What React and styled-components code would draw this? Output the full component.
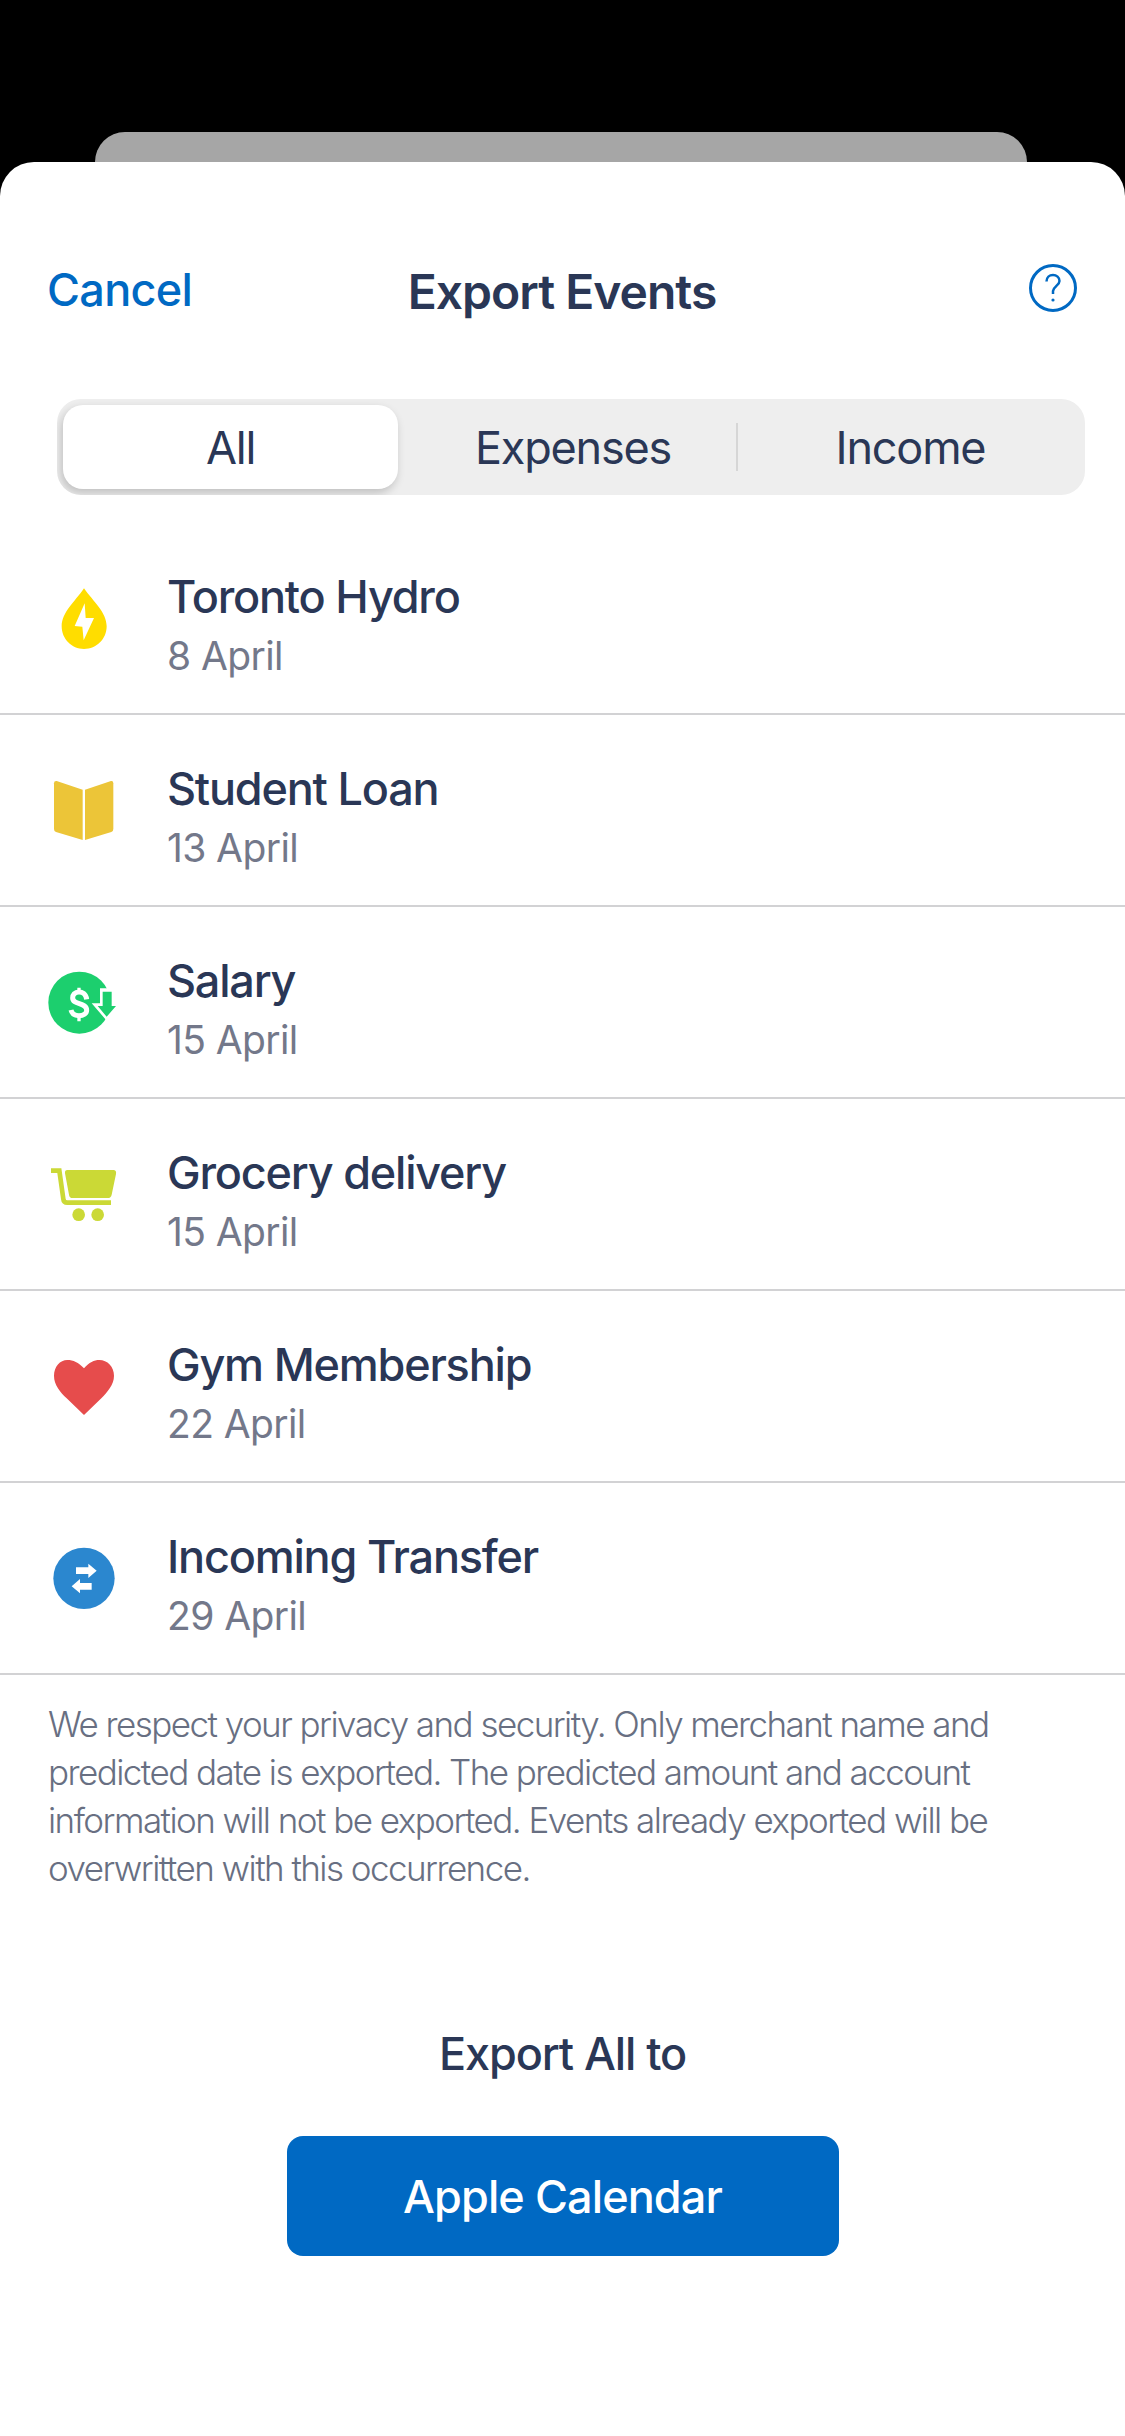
import React from 'react';
import styled, { createGlobalStyle } from 'styled-components';

const GlobalStyle = createGlobalStyle`
  html, body {
    margin: 0;
    padding: 0;
    background: #000;
    font-family: Inter, "Noto Sans", sans-serif;
  }
`;

const Page = styled.div`
  width: 1125px;
  height: 2436px;
  padding-top: 132px;
  box-sizing: border-box;
  overflow: hidden;
  background: #000;
`;

const BackCard = styled.div`
  height: 30px;
  margin: 0 98px 0 95px;
  background: #a6a6a6;
  border-radius: 30px 30px 0 0;
`;

const Sheet = styled.div`
  height: 2274px;
  background: #fff;
  border-radius: 34px 34px 0 0;
`;

const Header = styled.div`
  display: grid;
  grid-template-columns: 1fr auto 1fr;
  align-items: center;
  height: 237px;
  padding: 22px 48px 0 47px;
  box-sizing: border-box;
`;

const Cancel = styled.div`
  font-size: 45px;
  font-weight: 500;
  letter-spacing: -0.7px;
  color: #0069c3;
  margin-top: -5px;
`;

const Title = styled.div`
  font-size: 48px;
  font-weight: 600;
  letter-spacing: -1px;
  color: #2a3756;
`;

const HelpIcon = styled.svg`
  justify-self: end;
  width: 48px;
  height: 48px;
  margin-top: -7px;
`;

const Segments = styled.div`
  display: grid;
  grid-template-columns: 335px 338px 1fr;
  align-items: stretch;
  width: 1028px;
  height: 96px;
  margin-left: 57px;
  padding: 6px 0 6px 6px;
  box-sizing: border-box;
  background: #eeeeee;
  border-radius: 24px;
  overflow: hidden;
`;

const Segment = styled.div`
  display: flex;
  align-items: center;
  justify-content: center;
  font-size: 45px;
  font-weight: 400;
  letter-spacing: -1.2px;
  color: #2a3756;
  background: ${({ $active }) => ($active ? '#fff' : 'transparent')};
  border-radius: 20px;
  box-shadow: ${({ $active }) => ($active ? '-2px 4px 10px rgba(0,0,0,.2)' : 'none')};
  padding-left: ${({ $pad }) => $pad || 0}px;
`;

const Divided = styled(Segment)`
  position: relative;
  &::before {
    content: '';
    position: absolute;
    left: 0;
    top: 18px;
    bottom: 18px;
    width: 2px;
    background: #d6d6d6;
  }
`;

const List = styled.div`
  margin-top: 28px;
`;

const Row = styled.div`
  display: flex;
  align-items: center;
  height: 192px;
  box-sizing: border-box;
  border-bottom: 2px solid #d2d2d4;
`;

const IconSlot = styled.svg`
  flex: none;
  width: 100px;
  height: 100px;
  margin: 0 37px 0 30px;
`;

const RowText = styled.div`
  display: flex;
  flex-direction: column;
  padding-top: 17px;
`;

const RowTitle = styled.div`
  font-size: 45px;
  line-height: 58px;
  font-weight: 500;
  letter-spacing: -1.2px;
  color: #2a3756;
`;

const RowDate = styled.div`
  font-size: 39px;
  line-height: 59px;
  font-weight: 400;
  letter-spacing: -0.6px;
  color: #73788a;
`;

const Note = styled.p`
  margin: 0;
  padding: 25px 48px 0;
  font-size: 35px;
  line-height: 48px;
  font-weight: 300;
  letter-spacing: -1.55px;
  color: #686f82;
`;

const ExportLabel = styled.div`
  margin-top: 133px;
  text-align: center;
  font-size: 45px;
  line-height: 58px;
  font-weight: 500;
  letter-spacing: -1.1px;
  color: #2a3756;
`;

const ExportButton = styled.button`
  display: block;
  width: 552px;
  height: 120px;
  margin: 53px auto 0;
  border: 0;
  border-radius: 16px;
  background: #0069c3;
  color: #fff;
  font-family: inherit;
  font-size: 45px;
  font-weight: 500;
  letter-spacing: -0.9px;
`;

const DropIcon = () => (
  <IconSlot viewBox="0 -3 300 300">
    <path fill="#ffdd00" d="M162 58C190 98 230 130 230 172C230 210 200 240 162 240C125 240 95 210 95 172C95 130 135 98 162 58Z" />
    <path fill="#fff" d="M164 103L134 171L157 173L161 214L192 147L167 147Z" />
  </IconSlot>
);

const BookIcon = () => (
  <IconSlot viewBox="0 3 300 300">
    <path fill="#ecc538" d="M80 66L158 92L158 243L78 219Q72 217 72 210L72 73Q72 65 80 66Z" />
    <path fill="#ecc538" d="M243 66L165 92L165 243L244 219Q250 217 250 210L250 73Q250 65 243 66Z" />
  </IconSlot>
);

const SalaryIcon = () => (
  <IconSlot viewBox="0 6 300 300">
    <circle cx="148" cy="158" r="93" fill="#1ccf6e" />
    <path fill="#fff" d="M210 115H255V160H275L230 212L185 160H210Z" />
    <path fill="#1ccf6e" d="M218 125H245V168H258L230 200L203 168H218Z" />
    <path fill="none" stroke="#fff" strokeWidth="15" d="M170 148C168 131 156 126 147 126C134 126 128 134 128 144C128 166 170 156 170 181C170 191 160 197 147 197C134 197 126 192 123 180" />
    <path fill="none" stroke="#fff" strokeWidth="10" d="M147 113V125M147 198V214" />
  </IconSlot>
);

const CartIcon = () => (
  <IconSlot viewBox="0 0 300 300">
    <path fill="none" stroke="#cbd936" strokeWidth="14" d="M63 80H88L100 165Q101 176 112 176H243" />
    <path fill="#cbd936" d="M112 78H250Q260 78 258 90L245 152Q243 162 233 162H128Q118 162 117 152L105 88Q104 78 112 78Z" />
    <circle cx="146" cy="212" r="19" fill="#cbd936" />
    <circle cx="203" cy="212" r="19" fill="#cbd936" />
  </IconSlot>
);

const HeartIcon = () => (
  <IconSlot viewBox="0 3 300 300">
    <path fill="#e64c4c" d="M162 100C145 82 130 75 112 75C90 75 72 95 72 122C72 150 90 170 110 190L162 240L214 190C232 170 252 150 252 122C252 95 232 75 208 75C192 75 178 82 162 100Z" />
  </IconSlot>
);

const TransferIcon = () => (
  <IconSlot viewBox="0 -3 300 300">
    <circle cx="162" cy="148" r="92" fill="#2b87cf" />
    <path fill="#fff" d="M138 115H175V104L200 125L175 147V135H138Z" />
    <path fill="#fff" d="M185 162H150V150L125 172L150 193V182H185Z" />
  </IconSlot>
);

const events = [
  { title: 'Toronto Hydro', date: '8 April', Icon: DropIcon },
  { title: 'Student Loan', date: '13 April', Icon: BookIcon },
  { title: 'Salary', date: '15 April', Icon: SalaryIcon },
  { title: 'Grocery delivery', date: '15 April', Icon: CartIcon },
  { title: 'Gym Membership', date: '22 April', Icon: HeartIcon },
  { title: 'Incoming Transfer', date: '29 April', Icon: TransferIcon },
];

export default function App() {
  return (
    <Page>
      <GlobalStyle />
      <BackCard />
      <Sheet>
        <Header>
          <Cancel>Cancel</Cancel>
          <Title>Export Events</Title>
          <HelpIcon viewBox="0 0 48 48" fill="none" stroke="#0069c3">
            <circle cx="24" cy="24" r="22.5" strokeWidth="3" />
            <path strokeWidth="2.5" d="M17.5 17.5C17.5 13 20.5 11 24 11C27.5 11 30.5 13.5 30.5 17C30.5 21 25 22 24 27V30" />
            <circle cx="24" cy="36" r="1.6" fill="#0069c3" stroke="none" />
          </HelpIcon>
        </Header>
        <Segments>
          <Segment $active>All</Segment>
          <Segment $pad={12}>Expenses</Segment>
          <Divided>Income</Divided>
        </Segments>
        <List>
          {events.map(({ title, date, Icon }) => (
            <Row key={title}>
              <Icon />
              <RowText>
                <RowTitle>{title}</RowTitle>
                <RowDate>{date}</RowDate>
              </RowText>
            </Row>
          ))}
        </List>
        <Note>
          We respect your privacy and security. Only merchant name and predicted date is exported. The predicted amount and account information will not be exported. Events already exported will be overwritten with this occurrence.
        </Note>
        <ExportLabel>Export All to</ExportLabel>
        <ExportButton>Apple Calendar</ExportButton>
      </Sheet>
    </Page>
  );
}
